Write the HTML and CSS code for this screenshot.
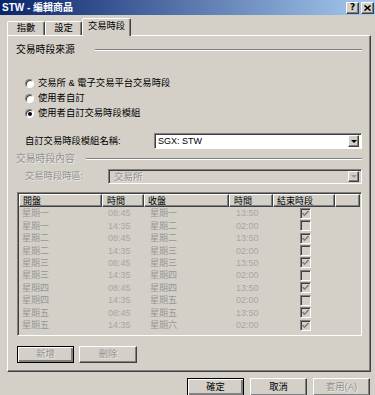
FILE: index.html
```html
<!DOCTYPE html>
<html lang="zh-Hant">
<head>
    <meta charset="UTF-8">
    <title>STW - 編輯商品</title>
    <link rel="stylesheet" href="styles.css">
</head>
<body>

<div class="window">
    <div class="titlebar">
        <span class="title">STW - 編輯商品</span>
        <div class="caption-btns">
            <span class="cap-btn">?</span>
            <span class="cap-btn">
                <svg width="7" height="6" viewBox="0 0 7 6"><path d="M0.5 0.5 L6.5 5.5 M6.5 0.5 L0.5 5.5" stroke="#000" stroke-width="1.6"/></svg>
            </span>
        </div>
    </div>

    <div class="tabs">
        <div class="tab tab-1">指數</div>
        <div class="tab tab-2">設定</div>
        <div class="tab tab-3 active">交易時段</div>
    </div>

    <div class="panel">
        <div class="group-head">
            <span>交易時段來源</span>
            <span class="line"></span>
        </div>

        <div class="radios">
            <div class="radio-row"><span class="radio"></span>交易所 &amp; 電子交易平台交易時段</div>
            <div class="radio-row"><span class="radio"></span>使用者自訂</div>
            <div class="radio-row"><span class="radio checked"></span>使用者自訂交易時段模組</div>
        </div>

        <div class="field-row field-1">
            <span class="field-label">自訂交易時段模組名稱:</span>
            <div class="combo combo-1">
                <span class="combo-text">SGX: STW</span>
                <span class="combo-arrow"><i class="tri"></i></span>
            </div>
        </div>

        <div class="group-head group-2 disabled">
            <span>交易時段內容</span>
            <span class="line"></span>
        </div>

        <div class="field-row field-2">
            <span class="field-label disabled">交易時段時區:</span>
            <div class="combo combo-2 off">
                <span class="combo-text">交易所</span>
                <span class="combo-arrow"><i class="tri"></i></span>
            </div>
        </div>

        <div class="list">
            <div class="list-head">
                <span class="c1">開盤</span>
                <span class="c2">時間</span>
                <span class="c3">收盤</span>
                <span class="c4">時間</span>
                <span class="c5">結束時段</span>
                <span class="c6"></span>
            </div>
            <div class="list-row"><span class="c1">星期一</span><span class="c2">08:45</span><span class="c3">星期一</span><span class="c4">13:50</span><span class="c5"><span class="chk"><svg width="7" height="7" viewBox="0 0 7 7"><path d="M0.5 3 L2.5 5.2 L6.5 1" /></svg></span></span></div>
            <div class="list-row"><span class="c1">星期一</span><span class="c2">14:35</span><span class="c3">星期二</span><span class="c4">02:00</span><span class="c5"><span class="chk"></span></span></div>
            <div class="list-row"><span class="c1">星期二</span><span class="c2">08:45</span><span class="c3">星期二</span><span class="c4">13:50</span><span class="c5"><span class="chk"><svg width="7" height="7" viewBox="0 0 7 7"><path d="M0.5 3 L2.5 5.2 L6.5 1" /></svg></span></span></div>
            <div class="list-row"><span class="c1">星期二</span><span class="c2">14:35</span><span class="c3">星期三</span><span class="c4">02:00</span><span class="c5"><span class="chk"></span></span></div>
            <div class="list-row"><span class="c1">星期三</span><span class="c2">08:45</span><span class="c3">星期三</span><span class="c4">13:50</span><span class="c5"><span class="chk"><svg width="7" height="7" viewBox="0 0 7 7"><path d="M0.5 3 L2.5 5.2 L6.5 1" /></svg></span></span></div>
            <div class="list-row"><span class="c1">星期三</span><span class="c2">14:35</span><span class="c3">星期四</span><span class="c4">02:00</span><span class="c5"><span class="chk"></span></span></div>
            <div class="list-row"><span class="c1">星期四</span><span class="c2">08:45</span><span class="c3">星期四</span><span class="c4">13:50</span><span class="c5"><span class="chk"><svg width="7" height="7" viewBox="0 0 7 7"><path d="M0.5 3 L2.5 5.2 L6.5 1" /></svg></span></span></div>
            <div class="list-row"><span class="c1">星期四</span><span class="c2">14:35</span><span class="c3">星期五</span><span class="c4">02:00</span><span class="c5"><span class="chk"></span></span></div>
            <div class="list-row"><span class="c1">星期五</span><span class="c2">08:45</span><span class="c3">星期五</span><span class="c4">13:50</span><span class="c5"><span class="chk"><svg width="7" height="7" viewBox="0 0 7 7"><path d="M0.5 3 L2.5 5.2 L6.5 1" /></svg></span></span></div>
            <div class="list-row"><span class="c1">星期五</span><span class="c2">14:35</span><span class="c3">星期六</span><span class="c4">02:00</span><span class="c5"><span class="chk"><svg width="7" height="7" viewBox="0 0 7 7"><path d="M0.5 3 L2.5 5.2 L6.5 1" /></svg></span></span></div>
        </div>

        <div class="list-btns">
            <span class="btn default off">新增</span>
            <span class="btn off">刪除</span>
        </div>
    </div>

    <div class="dialog-btns">
        <span class="btn default">確定</span>
        <span class="btn">取消</span>
        <span class="btn off">套用(A)</span>
    </div>
</div>

</body>
</html>
```

FILE: styles.css
```css
* {
    box-sizing: border-box;
}

body {
    margin: 0;
    overflow: hidden;
    background-color: #d4d0c8;
    font-family: "Liberation Sans", "Noto Sans CJK TC", sans-serif;
    font-size: 9.3px;
    color: #000;
}

.window {
    width: 375px;
    height: 395px;
}

/* title bar */
.titlebar {
    display: flex;
    justify-content: space-between;
    align-items: center;
    height: 15px;
    padding: 0 1px 0 2px;
    background: linear-gradient(to right, #0a246a, #a6caf0);
    color: #fff;
    font-weight: bold;
    font-size: 10px;
    line-height: 15px;
}
.caption-btns {
    display: flex;
    gap: 2px;
}
.cap-btn {
    display: flex;
    justify-content: center;
    align-items: center;
    width: 13px;
    height: 12px;
    background-color: #d4d0c8;
    border: 1px solid;
    border-color: #fff #404040 #404040 #fff;
    box-shadow: inset -1px -1px #808080;
    color: #000;
    font-size: 9px;
    font-family: "DejaVu Sans", sans-serif;
}

/* tabs */
.tabs {
    display: flex;
    align-items: flex-end;
    height: 17px;
    margin-top: 3px;
    padding-left: 7px;
    position: relative;
    z-index: 1;
}
.tab {
    height: 14px;
    text-align: center;
    line-height: 12px;
    border: 1px solid;
    border-bottom: none;
    border-color: #fff #404040 transparent #fff;
    border-radius: 2px 2px 0 0;
    box-shadow: inset -1px 0 #808080;
}
.tab-1 { width: 38px; }
.tab-2 { width: 37px; }
.tab-3 { width: 49px; }
.tab.active {
    height: 18px;
    margin-bottom: -1px;
    line-height: 15px;
    background-color: #d4d0c8;
}

/* tab page */
.panel {
    width: 364px;
    height: 337px;
    margin-left: 7px;
    padding: 7px 8px 0 8px;
    border: 1px solid;
    border-color: #fff #404040 #404040 #fff;
    box-shadow: inset -1px -1px #808080;
}

.group-head {
    display: flex;
    align-items: center;
    height: 13px;
    line-height: 13px;
    font-size: 9.8px;
}
.group-head .line {
    flex: 1;
    height: 2px;
    margin-left: 20px;
    border-top: 1px solid #808080;
    border-bottom: 1px solid #fff;
}
.group-2 {
    margin-top: 3px;
}
.group-2 .line {
    margin-left: 11px;
}

.disabled {
    color: #939393;
    text-shadow: 1px 1px rgba(255, 255, 255, 0.55);
}

.radios {
    margin-top: 20px;
    padding-left: 9px;
}
.radio-row {
    display: flex;
    align-items: center;
    height: 15px;
    line-height: 15px;
}
.radio {
    position: relative;
    width: 9px;
    height: 9px;
    margin-right: 4px;
    border-radius: 50%;
    border: 1px solid;
    border-color: #808080 #fff #fff #808080;
    box-shadow: inset 1px 1px #404040;
    background-color: #fff;
}
.radio.checked::after {
    content: "";
    position: absolute;
    left: 1.5px;
    top: 1.5px;
    width: 4px;
    height: 4px;
    border-radius: 50%;
    background-color: #000;
}

.field-row {
    display: flex;
    align-items: center;
    padding-left: 9px;
}
.field-1 {
    margin-top: 12px;
    height: 16px;
}
.field-2 {
    margin-top: 4px;
    height: 15px;
}
.field-label {
    line-height: 15px;
}

.combo {
    display: flex;
    align-items: stretch;
    height: 100%;
    margin-left: auto;
    padding: 2px;
    border: 1px solid;
    border-color: #808080 #fff #fff #808080;
    box-shadow: inset 1px 1px #404040;
    background-color: #fff;
}
.combo-1 {
    width: 208px;
}
.combo-2 {
    width: 254px;
}
.combo-text {
    flex: 1;
    padding-left: 1px;
    line-height: 10px;
    font-size: 9px;
}
.combo-2 .combo-text {
    padding-left: 3px;
    font-size: 9.5px;
    color: #939393;
    text-shadow: 1px 1px rgba(255, 255, 255, 0.5);
}
.combo.off {
    background-color: #d4d0c8;
}
.combo-arrow {
    display: flex;
    justify-content: center;
    align-items: center;
    width: 11px;
    margin: -1px 0 -1px 0;
    background-color: #d4d0c8;
    border: 1px solid;
    border-color: #fff #404040 #404040 #fff;
    box-shadow: inset -1px -1px #808080;
}
.tri {
    width: 0;
    height: 0;
    border-left: 3px solid transparent;
    border-right: 3px solid transparent;
    border-top: 3px solid #000;
}
.combo.off .tri {
    border-top-color: #9a9a9a;
}

/* list view */
.list {
    width: 345px;
    height: 144px;
    margin: 8px 0 0 1px;
    padding: 1px;
    border: 1px solid;
    border-color: #808080 #fff #fff #808080;
    box-shadow: inset 1px 1px #404040;
    font-size: 9px;
}
.list-head,
.list-row {
    display: flex;
}
.list-head {
    height: 13px;
    line-height: 12px;
}
.list-head span {
    height: 13px;
    padding-left: 3px;
    border-top: 1px solid #fff;
    border-left: 1px solid #fff;
    border-right: 1px solid #404040;
    border-bottom: 1px solid #404040;
    box-shadow: inset -1px -1px #808080;
}
.list-head .c2,
.list-head .c4 {
    padding-left: 4px;
}
.c1 { width: 83px; }
.c2 { width: 42px; }
.c3 { width: 85px; }
.c4 { width: 44px; }
.c5 { width: 62px; }
.c6 { flex: 1; }

.list-row {
    height: 12.45px;
    align-items: center;
    color: #979797;
}
.list-row span {
    line-height: 12px;
}
.list-row .c1 { padding-left: 3px; }
.list-row .c2 { padding-left: 6px; color: #a6a6a6; }
.list-row .c3 { padding-left: 6px; }
.list-row .c4 { padding-left: 7px; color: #a6a6a6; }
.list-row .c5 {
    display: flex;
    justify-content: center;
    padding-left: 2px;
}
.chk {
    display: flex;
    justify-content: center;
    align-items: center;
    width: 11px;
    height: 11px;
    border: 1px solid;
    border-color: #808080 #fff #fff #808080;
    box-shadow: inset 1px 1px #404040;
    background-color: #d4d0c8;
}
.chk svg path {
    fill: none;
    stroke: #808080;
    stroke-width: 1.6;
}

/* buttons */
.btn {
    display: flex;
    justify-content: center;
    align-items: center;
    width: 57px;
    height: 17px;
    border: 1px solid;
    border-color: #fff #404040 #404040 #fff;
    box-shadow: inset -1px -1px #808080;
    line-height: 13px;
}
.btn.default {
    border-color: #000;
    box-shadow: inset 1px 1px #fff, inset -2px -2px #808080, inset -1px -1px #404040;
}
.btn.off {
    color: #939393;
    text-shadow: 1px 1px rgba(255, 255, 255, 0.55);
}

.list-btns {
    display: flex;
    gap: 5px;
    margin: 10px 0 0 1px;
}
.list-btns .btn:last-child {
    width: 58px;
}

.dialog-btns {
    display: flex;
    justify-content: flex-end;
    gap: 6px;
    margin-top: 6px;
    padding-right: 5px;
}
.dialog-btns .btn {
    height: 18px;
}
```
